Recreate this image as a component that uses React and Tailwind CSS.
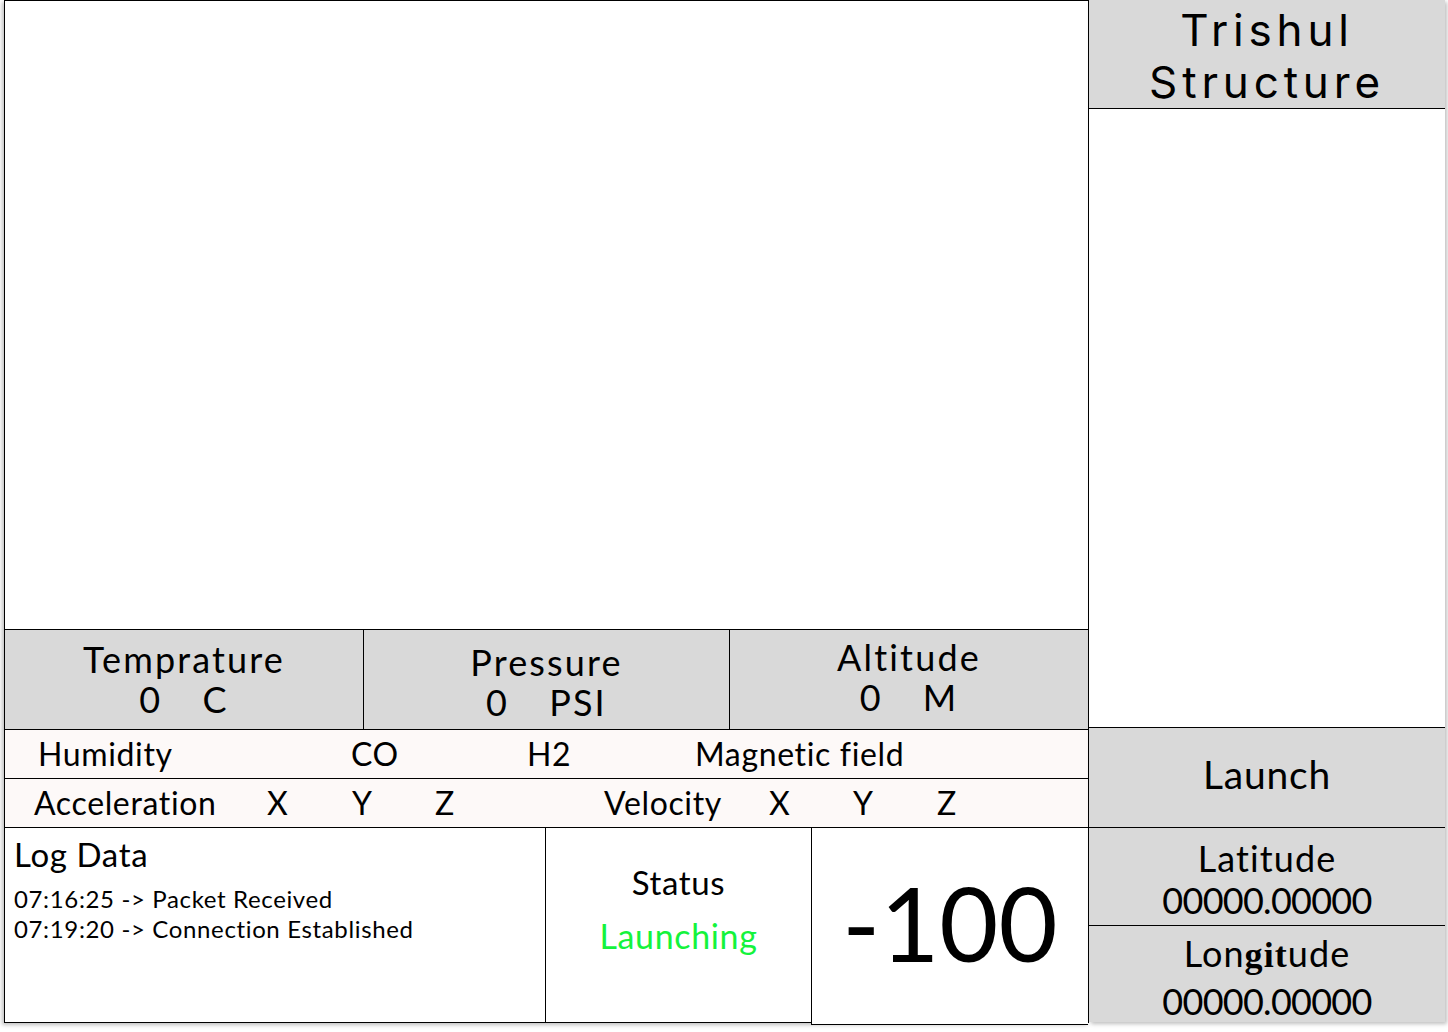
import React from 'react';

const SensorCell = ({ title, value, unit, className = '' }) => (
    <div className={`flex flex-col items-center justify-center leading-[40px] text-[36px] tracking-[0.06em] ${className}`}>
        <div>{title}</div>
        <div className="flex gap-[40px]">
            <span>{value}</span>
            <span>{unit}</span>
        </div>
    </div>
);

const App = () => {
    const logs = [
        '07:16:25 -> Packet Received',
        '07:19:20 -> Connection Established',
    ];

    return (
        <div className="w-[1448px] h-[1032px] bg-white flex text-black font-['Lato',sans-serif] [font-variant-ligatures:none]">
            {/* main panel */}
            <div className="ml-[4px] w-[1085px] h-[1023px] flex flex-col border-l border-t border-r border-black shadow-[-2px_2px_4px_rgba(0,0,0,0.25)] tracking-[0.04em]">
                <div className="h-[628px] bg-white"></div>

                <div className="h-[100px] flex border-t border-black bg-[#d9d9d9]">
                    <SensorCell title="Temprature" value="0" unit="C" className="w-[358px] pb-[2px]" />
                    <SensorCell title="Pressure" value="0" unit="PSI" className="w-[366px] border-l border-black pt-[4px]" />
                    <SensorCell title="Altitude" value="0" unit="M" className="flex-1 border-l border-black pb-[6px]" />
                </div>

                <div className="h-[49px] flex items-center border-t border-black bg-[#fdf9f8] text-[32px] pl-[33px]">
                    <span className="w-[313px]">Humidity</span>
                    <span className="w-[176px]">CO</span>
                    <span className="w-[168px]">H2</span>
                    <span className="whitespace-pre">Magnetic field</span>
                </div>

                <div className="h-[49px] flex items-center border-t border-black bg-[#fdf9f8] text-[32px] pl-[29px]">
                    <span className="w-[233px]">Acceleration</span>
                    <span className="w-[85px]">X</span>
                    <span className="w-[83px]">Y</span>
                    <span className="w-[169px]">Z</span>
                    <span className="w-[165px]">Velocity</span>
                    <span className="w-[84px]">X</span>
                    <span className="w-[84px]">Y</span>
                    <span>Z</span>
                </div>

                <div className="flex-1 flex border-t border-black">
                    <div className="w-[540px] border-b border-black px-[9px] pt-[6px]">
                        <div className="text-[33px] leading-[40px] mb-[10px]">Log Data</div>
                        {logs.map((l) => (
                            <div key={l} className="text-[24px] leading-[30px]">{l}</div>
                        ))}
                    </div>
                    <div className="w-[266px] border-l border-b border-black flex flex-col items-center pt-[32px]">
                        <div className="text-[33px] leading-[44px]">Status</div>
                        <div className="text-[34px] leading-[44px] mt-[10px] text-[#14f33c]">Launching</div>
                    </div>
                    <div className="flex-1 -mb-[2px] border-l border-b border-black flex items-center justify-center pb-[6px] bg-white tracking-normal">
                        <span className="text-[102px] leading-none">-100</span>
                    </div>
                </div>
            </div>

            {/* right column */}
            <div className="w-[356px] h-[1022px] flex flex-col shadow-[2px_2px_4px_rgba(0,0,0,0.25)]">
                <div className="h-[109px] bg-[#d9d9d9] border-b border-black flex flex-col items-center justify-center pt-[4px] font-['Inter',sans-serif] text-[44px] leading-[52px] tracking-[0.11em]">
                    <div>Trishul</div>
                    <div>Structure</div>
                </div>
                <div className="flex-1 bg-white"></div>
                <div className="h-[100px] bg-[#d9d9d9] border-t border-black flex items-center justify-center pb-[6px] text-[39px] tracking-[0.02em]">
                    Launch
                </div>
                <div className="h-[98px] bg-[#d9d9d9] border-t border-black flex flex-col items-center justify-center pt-[4px] text-[36px] leading-[42px]">
                    <div className="tracking-[0.03em]">Latitude</div>
                    <div className="tracking-[-0.02em]">00000.00000</div>
                </div>
                <div className="h-[97px] bg-[#d9d9d9] border-t border-black flex flex-col items-center justify-center pt-[6px] text-[36px] leading-[46px]">
                    <div className="tracking-[0.03em]">Lon<span className="font-bold font-['Liberation_Serif',serif]">git</span>ude</div>
                    <div className="tracking-[-0.02em]">00000.00000</div>
                </div>
            </div>
        </div>
    );
};

export default App;
